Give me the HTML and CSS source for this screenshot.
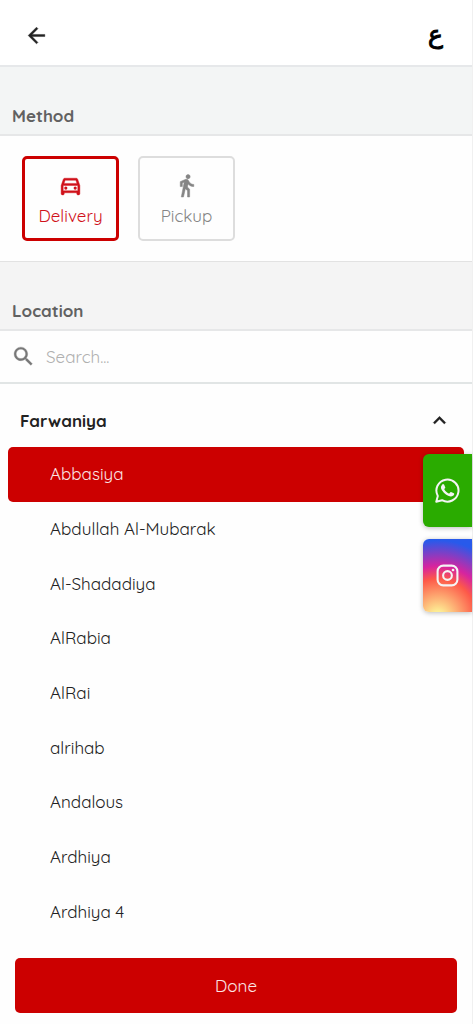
FILE: index.html
```html
<!DOCTYPE html>
<html lang="en">
<head>
<meta charset="utf-8">
<meta name="viewport" content="width=device-width, initial-scale=1">
<title>Delivery location</title>
<link rel="stylesheet" href="styles.css">
</head>
<body>
<div class="page">
  <header class="topbar">
    <button class="icon-button" type="button" aria-label="Back">
      <svg class="icon" viewBox="0 0 24 24"><path stroke="currentColor" stroke-width=".4" d="M20 11H7.800l5.600-5.600L12 4l-8 8 8 8 1.400-1.400L7.800 13H20z"/></svg>
    </button>
    <button class="language" type="button" lang="ar">ع</button>
  </header>
  <main class="content">
    <h2 class="section-title section-title-first">Method</h2>
    <div class="methods" role="radiogroup" aria-label="Method">
      <label class="method">
        <input class="method-input" type="radio" name="method" checked>
        <svg class="icon" viewBox="0 0 24 24"><path stroke="currentColor" stroke-width=".4" d="M18.920 6.010C18.720 5.420 18.160 5 17.500 5h-11c-.66 0-1.210.42-1.420 1.010L3 12v8c0 .55.45 1 1 1h1c.55 0 1-.45 1-1v-1h12v1c0 .55.45 1 1 1h1c.55 0 1-.45 1-1v-8l-2.080-5.990zM6.850 7h10.290l1.040 3H5.810l1.040-3zM19 17H5v-5h14v5z"/><circle cx="7.500" cy="14.500" r="1.500"/><circle cx="16.500" cy="14.500" r="1.500"/></svg>
        <span>Delivery</span>
      </label>
      <label class="method">
        <input class="method-input" type="radio" name="method">
        <svg class="icon" viewBox="0 0 24 24"><path stroke="currentColor" stroke-width=".5" d="M13.500 5.500c1.100 0 2-.9 2-2s-.9-2-2-2-2 .9-2 2 .9 2 2 2zM9.800 8.900L7 23h2.100l1.800-8 2.100 2v6h2v-7.500l-2.100-2 .6-3C14.800 12 16.800 13 19 13v-2c-1.900 0-3.500-1-4.300-2.400l-1-1.600c-.4-.6-1-1-1.700-1-.3 0-.5.1-.8.100L6 8.300V13h2V9.600l1.800-.7"/></svg>
        <span>Pickup</span>
      </label>
    </div>
    <h2 class="section-title">Location</h2>
    <label class="search">
      <svg class="icon" viewBox="0 0 24 24"><path stroke="currentColor" stroke-width=".3" d="M15.500 14h-.79l-.28-.27C15.410 12.590 16 11.110 16 9.500 16 5.910 13.090 3 9.500 3S3 5.910 3 9.500 5.910 16 9.500 16c1.610 0 3.090-.59 4.230-1.570l.27.28v.79l5 4.990L20.490 19l-4.990-5zm-6 0C7.010 14 5 11.990 5 9.500S7.010 5 9.500 5 14 7.010 14 9.500 11.990 14 9.500 14z"/></svg>
      <input class="search-input" type="text" placeholder="Search..." aria-label="Search">
    </label>
    <button class="area" type="button" aria-expanded="true">
      <span>Farwaniya</span>
      <svg class="icon" viewBox="0 0 24 24"><path stroke="currentColor" stroke-width=".3" d="M12 8l-6 6 1.410 1.410L12 10.830l4.590 4.580L18 14z"/></svg>
    </button>
    <div class="places">
      <button class="place place-selected" type="button">Abbasiya</button>
      <button class="place" type="button">Abdullah Al-Mubarak</button>
      <button class="place" type="button">Al-Shadadiya</button>
      <button class="place" type="button">AlRabia</button>
      <button class="place" type="button">AlRai</button>
      <button class="place" type="button">alrihab</button>
      <button class="place" type="button">Andalous</button>
      <button class="place" type="button">Ardhiya</button>
      <button class="place" type="button">Ardhiya 4</button>
    </div>
  </main>
  <footer class="footer">
    <button class="done" type="button">Done</button>
  </footer>
  <nav class="social" aria-label="Contact">
    <a class="social-link whatsapp" href="#" aria-label="WhatsApp">
      <svg class="icon" viewBox="0 0 24 24"><path fill="none" stroke="currentColor" stroke-width="1.900" stroke-linejoin="round" d="M1.200 22.800l1.500-5.600a10.600 10.600 0 1 1 4.100 4.100z"/><path d="M17.500 14.400c-.3-.2-1.800-.9-2-1-.3-.1-.5-.1-.7.200l-.9 1.100c-.2.200-.4.200-.7.100-1.700-.8-3.300-2-4.200-3.800-.2-.3 0-.5.100-.6l.7-.9c.1-.2.1-.4 0-.6L8.900 6.700c-.3-.6-.5-.6-.7-.6h-.6c-.3 0-.7.100-.9.500-1.500 1.500-1.100 3.600 0 5.200 2.300 3.500 5 5.200 8.300 6 1.200.2 3.200-.7 3.400-2.100.1-.7.100-1.100-.9-1.300z"/></svg>
    </a>
    <a class="social-link instagram" href="#" aria-label="Instagram">
      <svg class="icon" viewBox="0 0 24 24"><g fill="none" stroke="currentColor" stroke-width="2"><rect x="2.500" y="2.500" width="19" height="19" rx="5.500"/><circle cx="12" cy="12" r="4.200"/></g><circle cx="17.300" cy="6.700" r="1.300"/></svg>
    </a>
  </nav>
</div>
</body>
</html>
```
FILE: styles.css
```css
* {
  box-sizing: border-box;
}

body {
  margin: 0;
  background: #fefefe;
  color: #222;
  font-family: Quicksand, Lato, sans-serif;
  font-size: 17px;
  line-height: 24px;
}

button,
input {
  padding: 0;
  border: 0;
  background: none;
  color: inherit;
  font: inherit;
}

.page {
  position: relative;
  display: flex;
  flex-direction: column;
  min-height: 100vh;
  border-right: 1px solid #f0f0f0;
}

.icon {
  display: block;
  width: 25px;
  height: 25px;
  fill: currentColor;
}

.topbar {
  display: flex;
  align-items: center;
  justify-content: space-between;
  height: 67px;
  padding: 5px 29px 0 24px;
  border-bottom: 2px solid #e6e8ea;
  background: #fff;
}

.language {
  color: #000;
  font-family: "DejaVu Sans", sans-serif;
  font-size: 25px;
  line-height: 32px;
  -webkit-text-stroke: 1px #000;
}

.content {
  display: flex;
  flex: 1;
  flex-direction: column;
}

.section-title {
  margin: 0;
  padding: 37px 12px 6px;
  border-bottom: 2px solid #e6e7e8;
  background: #f4f4f4;
  color: #616161;
  font-size: 17px;
  font-weight: 700;
}

.section-title-first {
  background: #f3f5f5;
}

.methods {
  display: flex;
  gap: 19px;
  padding: 20px 22px;
  border-bottom: 1px solid #e2e2e2;
}

.method {
  display: flex;
  flex-direction: column;
  align-items: center;
  justify-content: center;
  gap: 6px;
  width: 97px;
  height: 85px;
  padding-top: 3px;
  border: 2px solid #ddd;
  border-radius: 5px;
  color: #858585;
}

.method:has(:checked) {
  border: 3px solid #c00;
  color: #d0111a;
}

.method-input {
  position: absolute;
  opacity: 0;
}

.search {
  display: flex;
  align-items: center;
  gap: 10px;
  padding: 13px 11px;
  border-bottom: 2px solid #e1e5e5;
  color: #777;
}

.search-input {
  flex: 1;
  min-width: 0;
  height: 24px;
  outline: 0;
  color: #222;
}

.search-input::placeholder {
  color: #b0b0b0;
  opacity: 1;
}

.area {
  display: flex;
  align-items: center;
  justify-content: space-between;
  height: 63px;
  padding: 10px 20px 0;
  font-weight: 700;
}

.places {
  display: grid;
  flex: 1;
  grid-auto-rows: minmax(48px, 1fr);
  padding: 0 8px;
}

.place {
  padding: 0 42px;
  border-radius: 5px;
  text-align: left;
}

.place-selected {
  background: #c00;
  color: #fbe4e4;
}

.footer {
  padding: 19px 15px 11px;
}

.done {
  width: 100%;
  height: 55px;
  border-radius: 5px;
  background: #c00;
  color: #fbe4e4;
}

.social {
  position: absolute;
  top: 454px;
  right: 0;
  display: grid;
  gap: 12px;
}

.social-link {
  display: flex;
  align-items: center;
  justify-content: center;
  width: 49px;
  height: 73px;
  border-radius: 6px 0 0 6px;
  box-shadow: 0 1px 5px #0004;
  color: #f4f4f4;
}

.whatsapp {
  background: #2aab00;
}

.instagram {
  background: radial-gradient(circle at 30% 107%, #fdf497 0%, #fdf497 5%, #fd5949 45%, #d6249f 60%, #285aeb 90%);
}
```
